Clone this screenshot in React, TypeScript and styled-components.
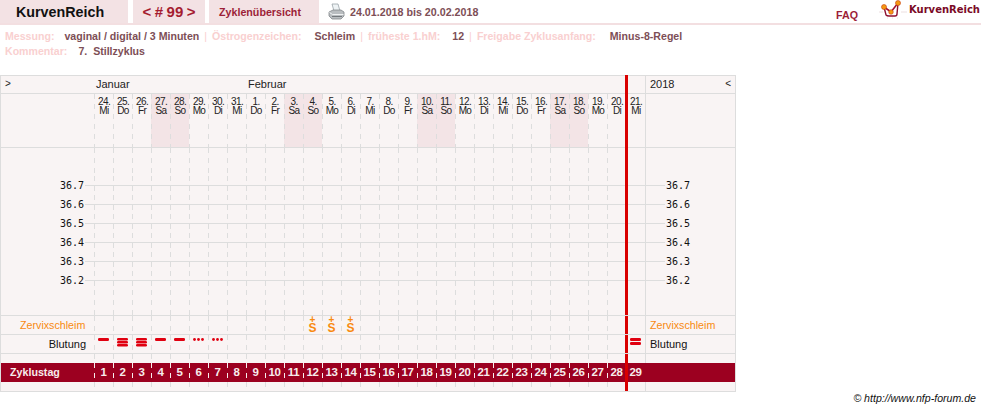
import styled, { createGlobalStyle } from "styled-components";

const GlobalStyle = createGlobalStyle`
    html, body {
        margin: 0;
        padding: 0;
        background: #fff;
        font-family: "Liberation Sans", Arial, sans-serif;
    }
`;

const weekdays = ["Mi", "Do", "Fr", "Sa", "So", "Mo", "Di"];
const dates = [24, 25, 26, 27, 28, 29, 30, 31, 1, 2, 3, 4, 5, 6, 7, 8, 9, 10, 11, 12, 13, 14, 15, 16, 17, 18, 19, 20, 21];
const days = dates.map((date, i) => ({
    date,
    weekday: weekdays[i % 7],
    weekend: i % 7 === 3 || i % 7 === 4,
    cycleDay: i + 1,
}));
const temps = ["36.7", "36.6", "36.5", "36.4", "36.3", "36.2"];

const mucusDays = [12, 13, 14];
const bleeding: Record<number, "one" | "two" | "three" | "dots"> = {
    1: "one",
    2: "three",
    3: "three",
    4: "one",
    5: "one",
    6: "dots",
    7: "dots",
    29: "two",
};

const Printer = () => (
    <svg width="17" height="17" viewBox="0 0 17 17">
        <path d="M4 1h6l2 7H6z" fill="#eef3f5" stroke="#9aa3a8" strokeWidth="0.8" />
        <path d="M1 9l4-2h8l3 2v4l-3 3H4l-3-3z" fill="#b9bdc0" stroke="#83888c" strokeWidth="0.8" />
        <path d="M1.5 9.5l3 2h11" fill="none" stroke="#f0f2f3" strokeWidth="1" />
        <path d="M4 13.5h10" stroke="#73787c" strokeWidth="1" />
    </svg>
);

const LogoMark = () => (
    <svg width="28" height="19" viewBox="0 0 28 19">
        <path d="M0 12h4M22 12h6M8 18h1M13 18h1M18 18h1" stroke="#ecdfe0" strokeWidth="1" />
        <path d="M5 7l2 8q1 1 3 1h6q2 0 2-2l1-11" fill="none" stroke="#8e1030" strokeWidth="1.4" />
        <path d="M5 7l7 5 7-9" fill="none" stroke="#a01030" strokeWidth="1.6" />
        <circle cx="5" cy="7" r="2.5" fill="#f49a12" stroke="#c83a10" strokeWidth="0.6" />
        <circle cx="12" cy="12" r="2.3" fill="#f49a12" stroke="#c83a10" strokeWidth="0.6" />
        <circle cx="19" cy="3" r="2.5" fill="#f49a12" stroke="#c83a10" strokeWidth="0.6" />
    </svg>
);

const BleedMark = ({ kind }: { kind: "one" | "two" | "three" | "dots" }) => {
    if (kind === "dots") {
        return (
            <svg width="11" height="3" viewBox="0 0 11 3">
                <circle cx="1.5" cy="1.5" r="1.4" fill="#e00010" />
                <circle cx="5.5" cy="1.5" r="1.4" fill="#e00010" />
                <circle cx="9.5" cy="1.5" r="1.4" fill="#e00010" />
            </svg>
        );
    }
    const count = kind === "one" ? 1 : kind === "two" ? 2 : 3;
    const barHeight = kind === "three" ? 2.4 : 3;
    const step = kind === "three" ? 3 : 4;
    return (
        <svg width="11" height={count * step} viewBox={`0 0 11 ${count * step}`}>
            {Array.from({ length: count }, (_, i) => (
                <rect key={i} x="0" y={i * step} width="11" height={barHeight} rx="1.3" fill="#e00010" />
            ))}
        </svg>
    );
};

export default function App() {
    return (
        <Page>
            <GlobalStyle />
            <Header>
                <BrandTab>KurvenReich</BrandTab>
                <CycleTab>&lt; # 99 &gt;</CycleTab>
                <OverviewTab>Zyklenübersicht</OverviewTab>
                <PrintButton>
                    <Printer />
                </PrintButton>
                <DateRange>24.01.2018 bis 20.02.2018</DateRange>
                <FaqLink>FAQ</FaqLink>
                <Logo>
                    <LogoMark />
                    <LogoText>KurvenReich</LogoText>
                </Logo>
            </Header>

            <Meta>
                <MetaLine>
                    <MetaKey>Messung:</MetaKey>
                    <MetaValue $gap={10}>vaginal / digital / 3 Minuten</MetaValue>
                    <Sep>|</Sep>
                    <MetaKey>Östrogenzeichen:</MetaKey>
                    <MetaValue $gap={13}>Schleim</MetaValue>
                    <Sep>|</Sep>
                    <MetaKey>früheste 1.hM:</MetaKey>
                    <MetaValue $gap={12}>12</MetaValue>
                    <Sep>|</Sep>
                    <MetaKey>Freigabe Zyklusanfang:</MetaKey>
                    <MetaValue $gap={14}>Minus-8-Regel</MetaValue>
                </MetaLine>
                <MetaLine>
                    <MetaKey>Kommentar:</MetaKey>
                    <MetaValue $gap={11}>7.&nbsp; Stillzyklus</MetaValue>
                </MetaLine>
            </Meta>

            <Chart>
                <MarkerLine />
                <MonthRow>
                    <Arrow>&gt;</Arrow>
                    <Month $width={152}>Januar</Month>
                    <Month $width={397}>Februar</Month>
                    <YearCell>
                        2018
                        <ArrowRight>&lt;</ArrowRight>
                    </YearCell>
                </MonthRow>

                <DayRow>
                    <Side />
                    {days.map((d) => (
                        <DayCell key={d.cycleDay} $weekend={d.weekend}>
                            {d.date}.<br />
                            {d.weekday}
                        </DayCell>
                    ))}
                    <SideEnd />
                </DayRow>

                <Spacer $height={28}>
                    <Side />
                    {days.map((d) => <Cell key={d.cycleDay} />)}
                    <SideEnd />
                </Spacer>
                {temps.map((t) => (
                    <TempRow key={t}>
                        <TempLabel>{t}</TempLabel>
                        {days.map((d) => <Cell key={d.cycleDay} />)}
                        <TempLabelEnd>{t}</TempLabelEnd>
                    </TempRow>
                ))}
                <Spacer $height={25}>
                    <Side />
                    {days.map((d) => <Cell key={d.cycleDay} />)}
                    <SideEnd />
                </Spacer>

                <LabelRow>
                    <MucusLabel>Zervixschleim</MucusLabel>
                    {days.map((d) => (
                        <Cell key={d.cycleDay}>
                            {mucusDays.includes(d.cycleDay) && (
                                <MucusMark>
                                    <small>+</small>
                                    <b>S</b>
                                </MucusMark>
                            )}
                        </Cell>
                    ))}
                    <MucusLabelEnd>Zervixschleim</MucusLabelEnd>
                </LabelRow>

                <LabelRow>
                    <BleedLabel>Blutung</BleedLabel>
                    {days.map((d) => (
                        <BleedCell key={d.cycleDay}>
                            {bleeding[d.cycleDay] && <BleedMark kind={bleeding[d.cycleDay]} />}
                        </BleedCell>
                    ))}
                    <BleedLabelEnd>Blutung</BleedLabelEnd>
                </LabelRow>

                <BlankRow>
                    <Side />
                    {days.map((d) => <Cell key={d.cycleDay} />)}
                    <SideEnd />
                </BlankRow>

                <CycleRow>
                    <CycleLabel>Zyklustag</CycleLabel>
                    {days.map((d) => (
                        <CycleCell key={d.cycleDay}>{d.cycleDay}</CycleCell>
                    ))}
                    <div />
                </CycleRow>

                <BottomRow>
                    <Side />
                    {days.map((d) => <Cell key={d.cycleDay} />)}
                    <SideEnd />
                </BottomRow>
            </Chart>

            <Copyright>© http://www.nfp-forum.de</Copyright>
        </Page>
    );
}

const Page = styled.div`
    width: 981px;
    height: 411px;
    overflow: hidden;
    position: relative;
`;

const Header = styled.div`
    display: flex;
    align-items: stretch;
    height: 23px;
    border-bottom: 2px solid #f3dfe1;
`;

const Tab = styled.div`
    display: flex;
    align-items: center;
    justify-content: center;
    background: #f3e2e4;
`;

const BrandTab = styled(Tab)`
    justify-content: flex-start;
    width: 128px;
    padding-left: 16px;
    box-sizing: border-box;
    margin-right: 5px;
    font-size: 14.3px;
    font-weight: bold;
    color: #111;
`;

const CycleTab = styled(Tab)`
    width: 72px;
    margin-right: 4px;
    font-size: 15px;
    font-weight: bold;
    word-spacing: -0.7px;
    color: #a51c30;
`;

const OverviewTab = styled(Tab)`
    justify-content: flex-start;
    width: 110px;
    padding-left: 10px;
    box-sizing: border-box;
    font-size: 10.7px;
    font-weight: bold;
    color: #9c1f38;
`;

const PrintButton = styled.div`
    display: flex;
    align-items: center;
    margin-left: 9px;
    width: 22px;
`;

const DateRange = styled.div`
    display: flex;
    align-items: center;
    font-size: 10.7px;
    font-weight: bold;
    color: #7d4e56;
`;

const FaqLink = styled.div`
    margin-left: auto;
    margin-top: 9px;
    font-size: 10.7px;
    font-weight: bold;
    color: #9c1f38;
`;

const Logo = styled.div`
    display: flex;
    align-items: flex-start;
    margin-left: 21px;
    padding-right: 1px;
`;

const LogoText = styled.div`
    margin-left: 2px;
    margin-top: 4px;
    font-family: "DejaVu Sans", sans-serif;
    font-size: 10px;
    font-weight: bold;
    color: #7a0a26;
`;

const Meta = styled.div`
    height: 50px;
    padding: 4px 0 0 5px;
    box-sizing: border-box;
`;

const MetaLine = styled.div`
    display: flex;
    height: 15px;
    line-height: 15px;
    font-size: 10.6px;
    font-weight: bold;
    white-space: pre;
`;

const MetaKey = styled.span`
    color: #f9d0d0;
`;

const MetaValue = styled.span<{ $gap: number }>`
    margin-left: ${({ $gap }) => $gap}px;
    color: #7d4e56;
`;

const Sep = styled.span`
    margin: 0 5px;
    font-weight: normal;
    color: #f9d0d0;
`;

const Chart = styled.div`
    position: relative;
    width: 736px;
    box-sizing: border-box;
    border: 1px solid #dddddd;
    background: #f9f4f4;
`;

const MarkerLine = styled.div`
    position: absolute;
    left: 624px;
    top: -1px;
    bottom: 0;
    width: 3px;
    background: #d90000;
    z-index: 2;
`;

const GridRow = styled.div`
    display: grid;
    grid-template-columns: 93px repeat(29, 19px) 90px;
`;

const MonthRow = styled.div`
    display: flex;
    height: 17px;
    line-height: 17px;
    font-size: 11px;
    color: #222;
    border-bottom: 1px solid #dddddd;
`;

const Arrow = styled.div`
    width: 95px;
    padding-left: 4px;
    box-sizing: border-box;
    font-size: 10px;
    line-height: 15px;
`;

const Month = styled.div<{ $width: number }>`
    width: ${({ $width }) => $width}px;
`;

const YearCell = styled.div`
    display: flex;
    justify-content: space-between;
    padding: 0 4px 0 4px;
    width: 90px;
    box-sizing: border-box;
    border-left: 1px solid #dddddd;
`;

const ArrowRight = styled.span`
    font-size: 10px;
    line-height: 15px;
`;

const Side = styled.div``;

const SideEnd = styled.div`
    border-left: 1px solid #dddddd;
`;

const Cell = styled.div`
    display: flex;
    justify-content: center;
    background-image: repeating-linear-gradient(to bottom, #dddddd 0 5px, transparent 5px 10px);
    background-size: 1px 100%;
    background-repeat: no-repeat;
`;

const DayRow = styled(GridRow)`
    height: 53px;
    border-bottom: 1px solid #dddddd;
`;

const DayCell = styled(Cell)<{ $weekend: boolean }>`
    display: block;
    padding: 3px 0 0 1px;
    box-sizing: border-box;
    font-size: 10px;
    line-height: 9px;
    letter-spacing: -0.6px;
    text-align: center;
    color: #222;
    background-color: ${({ $weekend }) => ($weekend ? "#f3e4e6" : "transparent")};
`;

const Spacer = styled(GridRow)<{ $height: number }>`
    height: ${({ $height }) => $height}px;
`;

const TempRow = styled(GridRow)`
    height: 19px;
    background: linear-gradient(#dddddd, #dddddd) no-repeat 84px 9px / 580px 1px;
`;

const TempLabel = styled.div`
    padding-right: 10px;
    font-family: "DejaVu Sans Mono", monospace;
    font-size: 10px;
    line-height: 19px;
    color: #111;
    text-align: right;
`;

const TempLabelEnd = styled.div`
    padding-left: 20px;
    border-left: 1px solid #dddddd;
    font-family: "DejaVu Sans Mono", monospace;
    font-size: 10px;
    line-height: 19px;
    color: #111;
`;

// the row rule runs across the red marker, so it is repeated above it
const RuledRow = styled(GridRow)`
    position: relative;
    border-top: 1px solid #dddddd;
    &::before {
        content: "";
        position: absolute;
        top: -1px;
        left: 0;
        right: 0;
        height: 1px;
        background: #dddddd;
        z-index: 3;
    }
`;

const LabelRow = styled(RuledRow)`
    height: 19px;
    box-sizing: border-box;
`;

const MucusLabel = styled.div`
    padding-left: 19px;
    font-size: 10.7px;
    line-height: 18px;
    color: #f88a10;
`;

const MucusLabelEnd = styled(MucusLabel)`
    padding-left: 4px;
    border-left: 1px solid #dddddd;
`;

const BleedLabel = styled(MucusLabel)`
    padding: 0 8px 0 0;
    font-size: 11px;
    text-align: right;
    color: #111;
`;

const BleedLabelEnd = styled(BleedLabel)`
    padding: 0 0 0 4px;
    text-align: left;
    border-left: 1px solid #dddddd;
`;

const MucusMark = styled.div`
    display: flex;
    flex-direction: column;
    align-items: center;
    color: #f88a10;
    small {
        font-size: 10px;
        font-weight: bold;
        line-height: 7px;
    }
    b {
        font-size: 12px;
        line-height: 10px;
    }
`;

const BleedCell = styled(Cell)`
    align-items: flex-start;
    padding-top: 3px;
    box-sizing: border-box;
`;

const BlankRow = styled(RuledRow)`
    height: 9px;
`;

const CycleRow = styled(GridRow)`
    height: 19px;
    background: #9c0020;
`;

const CycleLabel = styled.div`
    padding-left: 9px;
    font-size: 10.7px;
    font-weight: bold;
    line-height: 19px;
    color: #f7ecec;
`;

const CycleCell = styled.div`
    font-size: 11.5px;
    font-weight: bold;
    letter-spacing: -0.3px;
    line-height: 19px;
    text-align: center;
    color: #f7ecec;
    background-image: repeating-linear-gradient(to bottom, #f7ecec 0 5px, transparent 5px 10px);
    background-size: 1px 100%;
    background-repeat: no-repeat;
`;

const BottomRow = styled(GridRow)`
    height: 9px;
`;

const Copyright = styled.div`
    position: absolute;
    right: 5px;
    top: 392px;
    font-size: 10.6px;
    font-style: italic;
    color: #111;
`;
